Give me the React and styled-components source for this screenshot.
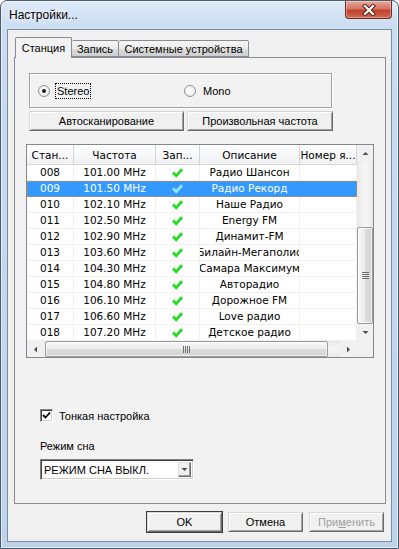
import React from "react";
import styled, { createGlobalStyle } from "styled-components";

const Global = createGlobalStyle`
  html, body { margin: 0; padding: 0; background: #fff; }
  body {
    font-family: "Liberation Sans", Arial, sans-serif;
    font-size: 11px;
    color: #000;
  }
  * { box-sizing: border-box; }
`;

const Window = styled.div`
  width: 399px;
  height: 549px;
  border: 1px solid #4f5b69;
  border-radius: 7px 7px 0 0;
  background: linear-gradient(180deg, #dde9f7 0px, #c9dcf2 28px, #bcd3ec 100%);
  box-shadow: inset 0 0 0 1px rgba(255, 255, 255, 0.55);
  display: flex;
  flex-direction: column;
  padding: 0 6px 6px;
`;

const TitleBar = styled.div`
  height: 28px;
  display: flex;
  align-items: flex-start;
`;

const Title = styled.div`
  line-height: 28px;
  padding-left: 2px;
  font-size: 12px;
  text-shadow: 0 0 6px #fff, 0 0 10px #fff;
`;

const CloseBtn = styled.div`
  margin-left: auto;
  width: 47px;
  height: 18px;
  border: 1px solid #6e2a20;
  border-top: none;
  border-radius: 0 0 4px 4px;
  background: linear-gradient(180deg, #e9a99b 0%, #d47566 45%, #c0402d 55%, #cf6a4c 100%);
  box-shadow: inset 0 0 0 1px rgba(255, 255, 255, 0.35);
  display: flex;
  align-items: center;
  justify-content: center;
`;

const Client = styled.div`
  flex: 1;
  border: 1px solid #7f8c9c;
  background: #f0f0f0;
  display: flex;
  flex-direction: column;
  padding-top: 7px;
`;

const TabStrip = styled.div`
  height: 20px;
  display: flex;
  align-items: flex-end;
  margin-left: 7px;
  position: relative;
  z-index: 1;
`;

const Tab = styled.div`
  width: ${(p) => p.$w}px;
  height: ${(p) => (p.$active ? 21 : 17)}px;
  margin-bottom: ${(p) => (p.$active ? -1 : 0)}px;
  border: 1px solid #898c95;
  border-bottom: ${(p) => (p.$active ? "none" : "1px solid #898c95")};
  border-left: ${(p) => (p.$first || p.$active ? "1px solid #898c95" : "none")};
  border-radius: 2px 2px 0 0;
  background: ${(p) =>
    p.$active ? "#f2f2f2" : "linear-gradient(180deg, #f5f5f5 0%, #ebebeb 50%, #dddddd 51%, #cfcfcf 100%)"};
  display: flex;
  align-items: center;
  justify-content: center;
  padding-top: ${(p) => (p.$active ? 0 : 1)}px;
`;

const Panel = styled.div`
  margin: 0 5px 0 6px;
  height: 447px;
  border: 1px solid #898c95;
  background: #f2f2f2;
  display: flex;
  flex-direction: column;
  align-items: flex-start;
  padding-left: 14px;
`;

const Group = styled.div`
  margin-top: 15px;
  width: 303px;
  height: 35px;
  border: 1px solid #a0a0a0;
  box-shadow: inset 1px 1px 0 #fff, 1px 1px 0 #fff;
  display: flex;
  align-items: center;
  padding-left: 8px;
`;

const RadioItem = styled.label`
  width: ${(p) => p.$w || "auto"};
  display: flex;
  align-items: center;
  gap: 5px;
`;

const RadioDot = styled.span`
  width: 12px;
  height: 12px;
  border-radius: 50%;
  border: 1px solid #8f8f8f;
  background: radial-gradient(circle at 40% 40%, #ffffff 0%, #e8e8e8 100%);
  display: flex;
  align-items: center;
  justify-content: center;
  &::after {
    content: "";
    width: 4px;
    height: 4px;
    border-radius: 50%;
    background: ${(p) => (p.$on ? "#1a1a1a" : "transparent")};
  }
`;

const RadioText = styled.span`
  padding: 1px 1px;
  border: 1px dotted ${(p) => (p.$focus ? "#000" : "transparent")};
  line-height: 12px;
`;

const ButtonRow = styled.div`
  margin-top: 3px;
  display: flex;
  gap: 3px;
`;

const Button = styled.div`
  width: ${(p) => p.$w}px;
  height: 20px;
  border: 1px solid;
  border-color: #d8d8d8 #6a6a6a #6a6a6a #d8d8d8;
  box-shadow: inset 1px 1px 0 #fff, inset -1px -1px 0 #a0a0a0;
  background: #f0f0f0;
  display: flex;
  align-items: center;
  justify-content: center;
  color: ${(p) => (p.$disabled ? "#a0a0a0" : "#000")};
  outline: ${(p) => (p.$default ? "1px solid #3c3c3c" : "none")};
  outline-offset: 0;
`;

const ListView = styled.div`
  margin-top: 13px;
  margin-left: -3px;
  width: 348px;
  height: 214px;
  border: 1px solid #828790;
  background: #fff;
  display: grid;
  grid-template-columns: 1fr 16px;
  grid-template-rows: 1fr 16px;
  font-family: "DejaVu Sans", Verdana, sans-serif;
  font-size: 10.5px;
`;

const ListMain = styled.div`
  overflow: hidden;
  display: flex;
  flex-direction: column;
`;

const HeaderRow = styled.div`
  height: 20px;
  display: flex;
  background: linear-gradient(180deg, #ffffff 0%, #f7f8f9 50%, #eff0f2 100%);
  border-bottom: 1px solid #d5d5d5;
`;

const HeaderCell = styled.div`
  width: ${(p) => p.$w}px;
  flex: none;
  border-right: 1px solid #d5d5d5;
  display: flex;
  align-items: center;
  justify-content: center;
  white-space: nowrap;
  overflow: hidden;
`;

const Row = styled.div`
  height: 16px;
  display: flex;
  background: ${(p) => (p.$sel ? "#3399ff" : "#fff")};
  color: ${(p) => (p.$sel ? "#fff" : "#000")};
  outline: ${(p) => (p.$sel ? "1px dotted #c98a3a" : "none")};
  outline-offset: -1px;
`;

const Cell = styled.div`
  width: ${(p) => p.$w}px;
  flex: none;
  border-right: 1px solid ${(p) => (p.$sel ? "#3399ff" : "#f0f0f0")};
  border-bottom: 1px solid ${(p) => (p.$sel ? "#3399ff" : "#f0f0f0")};
  display: flex;
  align-items: center;
  justify-content: center;
  white-space: nowrap;
  overflow: hidden;
  line-height: 15px;
`;

const VScroll = styled.div`
  display: flex;
  flex-direction: column;
  background: linear-gradient(90deg, #e8e8e8 0%, #f4f4f4 40%, #f4f4f4 60%, #e8e8e8 100%);
`;

const HScroll = styled.div`
  display: flex;
  background: linear-gradient(180deg, #e8e8e8 0%, #f4f4f4 40%, #f4f4f4 60%, #e8e8e8 100%);
`;

const Arrow = styled.div`
  width: ${(p) => (p.$h ? 17 : 16)}px;
  height: ${(p) => (p.$h ? 16 : 17)}px;
  flex: none;
  display: flex;
  align-items: center;
  justify-content: center;
  background: #f0f0f0;
`;

const Thumb = styled.div`
  flex: none;
  border: 1px solid #9a9a9a;
  border-radius: 2px;
  display: flex;
  align-items: center;
  justify-content: center;
  background: ${(p) =>
    p.$h
      ? "linear-gradient(180deg, #f7f7f7 0%, #ececec 50%, #dcdcdc 51%, #d3d3d3 100%)"
      : "linear-gradient(90deg, #f7f7f7 0%, #ececec 50%, #dcdcdc 51%, #d3d3d3 100%)"};
  box-shadow: inset 0 0 0 1px rgba(255, 255, 255, 0.7);
`;

const Spacer = styled.div`
  flex: 1;
`;

const Corner = styled.div`
  background: #f0f0f0;
`;

const CheckRow = styled.label`
  margin-top: 51px;
  margin-left: 11px;
  display: flex;
  align-items: center;
  gap: 6px;
  height: 13px;
`;

const CheckBox = styled.span`
  width: 13px;
  height: 13px;
  border: 1px solid;
  border-color: #808080 #ffffff #ffffff #808080;
  box-shadow: inset 1px 1px 0 #404040, inset -1px -1px 0 #d4d0c8;
  background: #fff;
  display: flex;
  align-items: center;
  justify-content: center;
`;

const FieldLabel = styled.div`
  margin-top: 18px;
  margin-left: 11px;
  line-height: 13px;
`;

const Select = styled.div`
  margin-top: 6px;
  margin-left: 11px;
  width: 154px;
  height: 21px;
  border: 1px solid;
  border-color: #808080 #ffffff #ffffff #808080;
  box-shadow: inset 1px 1px 0 #404040, inset -1px -1px 0 #d4d0c8;
  background: #fff;
  display: flex;
  align-items: center;
  padding: 0 2px 0 3px;
`;

const SelectText = styled.span`
  flex: 1;
`;

const DropBtn = styled.span`
  width: 13px;
  height: 15px;
  border: 1px solid;
  border-color: #e0e0e0 #6a6a6a #6a6a6a #e0e0e0;
  box-shadow: inset -1px -1px 0 #a0a0a0;
  background: #f0f0f0;
  display: flex;
  align-items: center;
  justify-content: center;
`;

const BottomBar = styled.div`
  margin-top: 8px;
  padding-right: 7px;
  display: flex;
  justify-content: flex-end;
  gap: 6px;
`;

const cols = [47, 82, 44, 100, 57];
const heads = ["Стан...", "Частота", "Зап...", "Описание", "Номер я..."];

const rows = [
  ["008", "101.00 MHz", "Радио Шансон"],
  ["009", "101.50 MHz", "Радио Рекорд"],
  ["010", "102.10 MHz", "Наше Радио"],
  ["011", "102.50 MHz", "Energy FM"],
  ["012", "102.90 MHz", "Динамит-FM"],
  ["013", "103.60 MHz", "Билайн-Мегаполис"],
  ["014", "104.30 MHz", "Самара Максимум"],
  ["015", "104.80 MHz", "Авторадио"],
  ["016", "106.10 MHz", "Дорожное FM"],
  ["017", "106.60 MHz", "Love радио"],
  ["018", "107.20 MHz", "Детское радио"],
];

const Tick = ({ color }) => (
  <svg width="11" height="10" viewBox="0 0 11 10">
    <path d="M1 4.6 L4.2 7.8 L10 1.2" fill="none" stroke={color} strokeWidth="2.8" />
  </svg>
);

const Tri = ({ dir }) => {
  const d = {
    up: "M0.5 4 L3.5 1 L6.5 4 Z",
    down: "M0.5 1 L3.5 4 L6.5 1 Z",
    left: "M4 0.5 L1 3.5 L4 6.5 Z",
    right: "M1 0.5 L4 3.5 L1 6.5 Z",
  }[dir];
  const h = dir === "up" || dir === "down";
  return (
    <svg width={h ? 7 : 5} height={h ? 5 : 7} viewBox={h ? "0 0 7 5" : "0 0 5 7"}>
      <path d={d} fill="#4d4d4d" />
    </svg>
  );
};

export default function App() {
  return (
    <Window>
      <Global />
      <TitleBar>
        <Title>Настройки...</Title>
        <CloseBtn>
          <svg width="14" height="12" viewBox="0 0 14 12">
            <path d="M3 2 L11 10 M11 2 L3 10" stroke="#5b1d14" strokeWidth="4.2" strokeLinecap="square" />
            <path d="M3 2 L11 10 M11 2 L3 10" stroke="#fff" strokeWidth="2.2" strokeLinecap="square" />
          </svg>
        </CloseBtn>
      </TitleBar>
      <Client>
        <TabStrip>
          <Tab $w={57} $active $first>Станция</Tab>
          <Tab $w={47}>Запись</Tab>
          <Tab $w={130}>Системные устройства</Tab>
        </TabStrip>
        <Panel>
          <Group>
            <RadioItem $w="146px">
              <RadioDot $on />
              <RadioText $focus>Stereo</RadioText>
            </RadioItem>
            <RadioItem>
              <RadioDot />
              <RadioText>Mono</RadioText>
            </RadioItem>
          </Group>
          <ButtonRow>
            <Button $w={155}>Автосканирование</Button>
            <Button $w={146}>Произвольная частота</Button>
          </ButtonRow>
          <ListView>
            <ListMain>
              <HeaderRow>
                {heads.map((h, i) => (
                  <HeaderCell key={h} $w={cols[i]}>{h}</HeaderCell>
                ))}
              </HeaderRow>
              {rows.map((r) => {
                const sel = r[0] === "009";
                return (
                  <Row key={r[0]} $sel={sel}>
                    <Cell $w={cols[0]} $sel={sel}>{r[0]}</Cell>
                    <Cell $w={cols[1]} $sel={sel}>{r[1]}</Cell>
                    <Cell $w={cols[2]} $sel={sel}>
                      <Tick color={sel ? "#8fe8ff" : "#22dd22"} />
                    </Cell>
                    <Cell $w={cols[3]} $sel={sel}>{r[2]}</Cell>
                    <Cell $w={cols[4]} $sel={sel}></Cell>
                  </Row>
                );
              })}
            </ListMain>
            <VScroll>
              <Arrow><Tri dir="up" /></Arrow>
              <Thumb style={{ marginTop: 65, height: 97 }}>
                <svg width="7" height="7" viewBox="0 0 7 7">
                  <path d="M0 0.5 H7 M0 2.5 H7 M0 4.5 H7 M0 6.5 H7" stroke="#6e6e6e" strokeWidth="1" />
                </svg>
              </Thumb>
              <Spacer />
              <Arrow><Tri dir="down" /></Arrow>
            </VScroll>
            <HScroll>
              <Arrow $h><Tri dir="left" /></Arrow>
              <Thumb $h style={{ marginLeft: 1, width: 283 }}>
                <svg width="7" height="7" viewBox="0 0 7 7">
                  <path d="M0.5 0 V7 M2.5 0 V7 M4.5 0 V7 M6.5 0 V7" stroke="#6e6e6e" strokeWidth="1" />
                </svg>
              </Thumb>
              <Spacer />
              <Arrow $h><Tri dir="right" /></Arrow>
            </HScroll>
            <Corner />
          </ListView>
          <CheckRow>
            <CheckBox>
              <svg width="9" height="9" viewBox="0 0 9 9">
                <path d="M1 4 L3.5 6.5 L8 1.5" fill="none" stroke="#000" strokeWidth="1.8" />
              </svg>
            </CheckBox>
            Тонкая настройка
          </CheckRow>
          <FieldLabel>Режим сна</FieldLabel>
          <Select>
            <SelectText>РЕЖИМ СНА ВЫКЛ.</SelectText>
            <DropBtn><Tri dir="down" /></DropBtn>
          </Select>
        </Panel>
        <BottomBar>
          <Button $w={75} $default>OK</Button>
          <Button $w={75}>Отмена</Button>
          <Button $w={75} $disabled>
            <span>При<u>м</u>енить</span>
          </Button>
        </BottomBar>
      </Client>
    </Window>
  );
}
